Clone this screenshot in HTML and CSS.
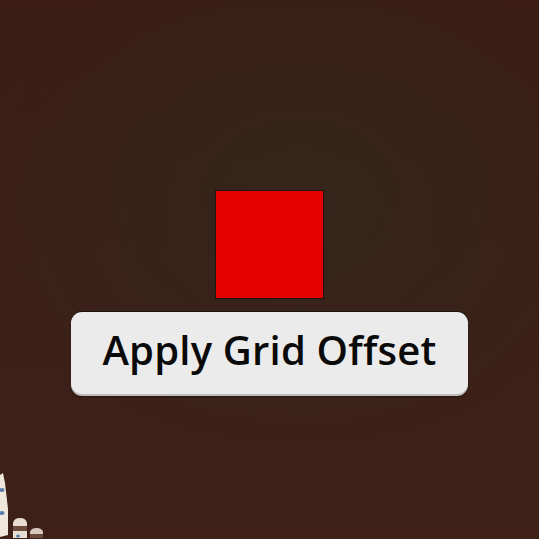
FILE: index.html
```html
<!DOCTYPE html>
<html>
<head>
<meta charset="utf-8">
<link rel="stylesheet" href="styles.css">
</head>
<body>
<main class="stage">
  <div class="square"></div>
  <button class="apply">Apply Grid Offset</button>
</main>
<svg class="decor" width="50" height="70" viewBox="0 0 50 70">
  <path d="M0 6 L3 4 L5 14 L8 40 L8 66 L0 68 Z" fill="#efe6dc"/>
  <ellipse cx="2" cy="21" rx="2.5" ry="2" fill="#5b7fa8"/>
  <ellipse cx="2" cy="44" rx="2.5" ry="2" fill="#5b7fa8"/>
  <path d="M13 69 L13 54 Q14 49 20 49 Q26 49 27 54 L27 69 Z" fill="#e8ddd2"/>
  <rect x="13" y="57" width="14" height="5" fill="#6a4a3a"/>
  <ellipse cx="18" cy="67" rx="2" ry="1.5" fill="#5b7fa8"/>
  <path d="M30 69 L30 63 Q31 59 36.5 59 Q42 59 43 63 L43 69 Z" fill="#d8c8bc"/>
  <rect x="30" y="65" width="13" height="4" fill="#6a4a3a"/>
</svg>
</body>
</html>
```
FILE: styles.css
```css
html, body {
  margin: 0;
  padding: 0;
  width: 539px;
  height: 539px;
  overflow: hidden;
}
body {
  position: relative;
  background:
    radial-gradient(ellipse 320px 260px at 300px 200px, rgba(52,38,26,0.9), rgba(52,38,26,0) 100%),
    linear-gradient(180deg, #3b1d13 0%, #3c2017 50%, #3e2017 100%);
  font-family: "Open Sans", "DejaVu Sans", sans-serif;
}
.stage {
  display: flex;
  flex-direction: column;
  align-items: center;
  padding-top: 190px;
}
.square {
  width: 107px;
  height: 107px;
  background: #e50000;
  border: 1px solid #1e1410;
}
.apply {
  margin-top: 13px;
  width: 397px;
  height: 82px;
  padding: 0 0 8px 0;
  border: none;
  border-radius: 11px;
  background: #ebebeb;
  color: #0a0a0a;
  font-family: "Open Sans", "DejaVu Sans", sans-serif;
  font-weight: 600;
  font-size: 40px;
  letter-spacing: 0.2px;
  box-shadow: 0 2px 0 #bdbdbd, 0 -1px 0 #1e140f, 0 3px 2px rgba(0,0,0,0.35);
  cursor: pointer;
}
.decor {
  position: absolute;
  left: 0;
  bottom: 0;
}
```
